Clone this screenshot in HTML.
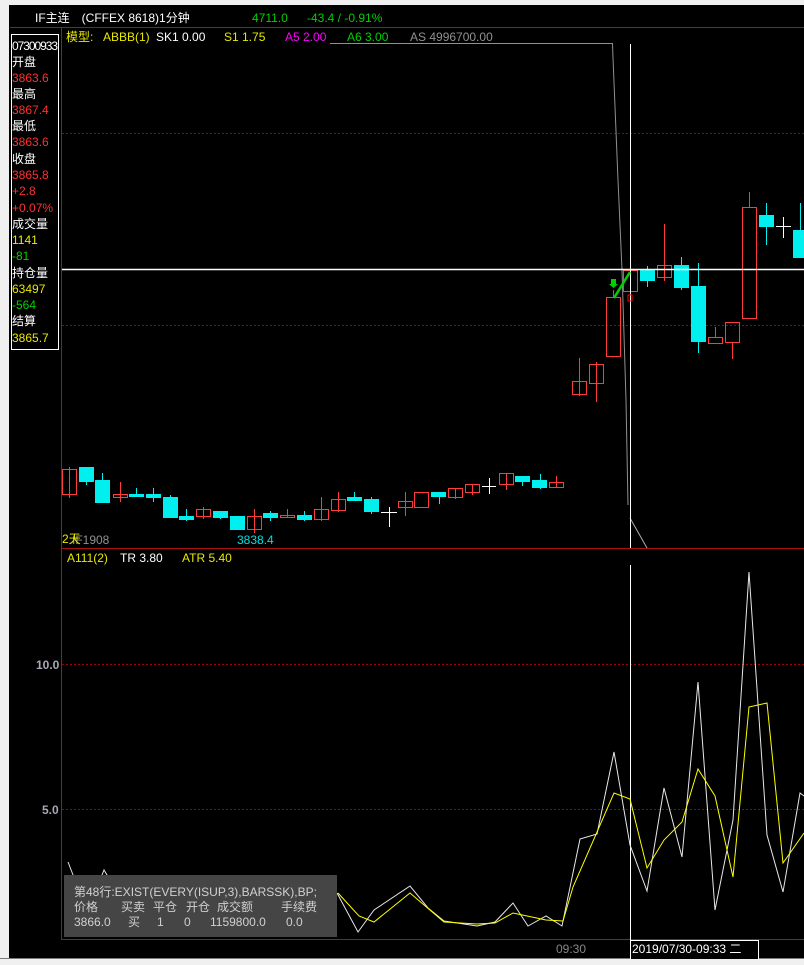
<!DOCTYPE html>
<html><head><meta charset="utf-8"><style>
html,body{margin:0;padding:0;background:#f0f0f0;width:804px;height:965px;overflow:hidden}
svg{position:absolute;left:0;top:0}
text{font-family:"Liberation Sans","Noto Sans CJK SC",sans-serif;font-size:12px}
</style></head><body>
<svg width="804" height="965" viewBox="0 0 804 965">
<rect x="0" y="0" width="804" height="965" fill="#f0f0f0"/>
<rect x="9" y="5" width="795" height="953" fill="#000"/>
<rect x="0" y="958" width="804" height="1" fill="#7a7a7a"/>
<!-- title -->
<text x="35" y="22" fill="#fff" font-size="12.5">IF主连　(CFFEX 8618)1分钟</text>
<text x="252" y="22" fill="#00d000" font-size="13">4711.0</text>
<text x="307" y="22" fill="#00d000" font-size="13">-43.4 / -0.91%</text>
<line x1="10" y1="27.5" x2="804" y2="27.5" stroke="#b01010"/>
<g font-size="12.5">
<text x="66" y="41" fill="#e8e800">模型:</text>
<text x="103" y="41" fill="#e8e800">ABBB(1)</text>
<text x="156" y="41" fill="#fff">SK1 0.00</text>
<text x="224" y="41" fill="#e8e800">S1 1.75</text>
<text x="285" y="41" fill="#ff00ff">A5 2.00</text>
<text x="347" y="41" fill="#00d000">A6 3.00</text>
<text x="410" y="41" fill="#909090">AS 4996700.00</text>
</g>
<!-- left info box -->
<rect x="11.5" y="34.5" width="47" height="315" fill="#000" stroke="#fff"/>
<g font-size="13">
<text x="12" y="50" fill="#fff" textLength="46" font-size="12">07300933</text>
<text x="12" y="66" fill="#fff">开盘</text>
<text x="12" y="82" fill="#ff3030">3863.6</text>
<text x="12" y="98" fill="#fff">最高</text>
<text x="12" y="114" fill="#ff3030">3867.4</text>
<text x="12" y="130" fill="#fff">最低</text>
<text x="12" y="146" fill="#ff3030">3863.6</text>
<text x="12" y="163" fill="#fff">收盘</text>
<text x="12" y="179" fill="#ff3030">3865.8</text>
<text x="12" y="195" fill="#ff3030">+2.8</text>
<text x="12" y="212" fill="#ff3030">+0.07%</text>
<text x="12" y="228" fill="#fff">成交量</text>
<text x="12" y="244" fill="#e8e800">1141</text>
<text x="12" y="260" fill="#00d000">-81</text>
<text x="12" y="277" fill="#fff">持仓量</text>
<text x="12" y="293" fill="#e8e800">63497</text>
<text x="12" y="309" fill="#00d000">-564</text>
<text x="12" y="325" fill="#fff">结算</text>
<text x="12" y="342" fill="#e8e800">3865.7</text>
</g>
<!-- frames -->
<line x1="61.5" y1="28" x2="61.5" y2="940" stroke="#b01010"/>
<line x1="61" y1="548.5" x2="804" y2="548.5" stroke="#b01010"/>
<line x1="61" y1="939.5" x2="804" y2="939.5" stroke="#b01010"/>
<g stroke="#a00000" stroke-dasharray="2,2">
<line x1="62" y1="133.5" x2="804" y2="133.5"/>
<line x1="62" y1="325.5" x2="804" y2="325.5"/>
<line x1="62" y1="664.5" x2="804" y2="664.5"/>
<line x1="62" y1="809.5" x2="804" y2="809.5"/>
</g>
<text x="36" y="669" fill="#a8a8b8" font-weight="bold" font-size="12">10.0</text>
<text x="42" y="814" fill="#a8a8b8" font-weight="bold" font-size="12">5.0</text>
<!-- gray price line -->
<polyline points="330,43.5 612.5,43.5 613,58 618,180 622,270 626,400 628,505" fill="none" stroke="#909090"/>
<line x1="630" y1="518" x2="647" y2="548" stroke="#aaa"/>
<!-- candles -->
<g stroke="#ff3c3c" fill="none">
<line x1="69.5" y1="467" x2="69.5" y2="498"/><rect x="62.5" y="469.5" width="14" height="25"/>
<line x1="120.5" y1="482" x2="120.5" y2="502"/><rect x="113.5" y="494.5" width="14" height="3"/>
<line x1="203.5" y1="507" x2="203.5" y2="519"/><rect x="196.5" y="509.5" width="14" height="7"/>
<line x1="254.5" y1="509" x2="254.5" y2="533"/><rect x="247.5" y="516.5" width="14" height="13"/>
<line x1="287.5" y1="509" x2="287.5" y2="517"/><rect x="280.5" y="515.5" width="14" height="2"/>
<line x1="321.5" y1="497" x2="321.5" y2="521"/><rect x="314.5" y="509.5" width="14" height="10"/>
<line x1="338.5" y1="492" x2="338.5" y2="512"/><rect x="331.5" y="499.5" width="14" height="11"/>
<line x1="405.5" y1="492" x2="405.5" y2="516"/><rect x="398.5" y="501.5" width="14" height="6"/>
<rect x="414.5" y="492.5" width="14" height="15"/>
<line x1="455.5" y1="488" x2="455.5" y2="499"/><rect x="448.5" y="488.5" width="14" height="9"/>
<line x1="472.5" y1="484" x2="472.5" y2="495"/><rect x="465.5" y="484.5" width="14" height="8"/>
<line x1="506.5" y1="473" x2="506.5" y2="490"/><rect x="499.5" y="473.5" width="14" height="11"/>
<line x1="556.5" y1="476" x2="556.5" y2="487"/><rect x="549.5" y="482.5" width="14" height="5"/>
<line x1="579.5" y1="358" x2="579.5" y2="396"/><rect x="572.5" y="381.5" width="14" height="13"/>
<line x1="596.5" y1="362" x2="596.5" y2="402"/><rect x="589.5" y="364.5" width="14" height="19"/>
<line x1="613.5" y1="290" x2="613.5" y2="297"/><rect x="606.5" y="297.5" width="14" height="59"/>
<rect x="623.5" y="270.5" width="14" height="21"/>
<line x1="664.5" y1="224" x2="664.5" y2="281"/><rect x="657.5" y="265.5" width="14" height="12"/>
<line x1="715.5" y1="327" x2="715.5" y2="337"/><rect x="708.5" y="337.5" width="14" height="6"/>
<line x1="732.5" y1="342" x2="732.5" y2="359"/><rect x="725.5" y="322.5" width="14" height="20"/>
<line x1="749.5" y1="192" x2="749.5" y2="207"/><rect x="742.5" y="207.5" width="14" height="111"/>
</g>
<g fill="#00f0f0" stroke="#00f0f0">
<line x1="86.5" y1="467" x2="86.5" y2="485"/><rect x="79.5" y="467.5" width="14" height="14"/>
<line x1="102.5" y1="473" x2="102.5" y2="502"/><rect x="95.5" y="480.5" width="14" height="22"/>
<line x1="136.5" y1="488" x2="136.5" y2="496"/><rect x="129.5" y="494.5" width="14" height="2"/>
<line x1="153.5" y1="488" x2="153.5" y2="502"/><rect x="146.5" y="494.5" width="14" height="3"/>
<line x1="170.5" y1="495" x2="170.5" y2="517"/><rect x="163.5" y="497.5" width="14" height="20"/>
<line x1="186.5" y1="509" x2="186.5" y2="521"/><rect x="179.5" y="516.5" width="14" height="3"/>
<line x1="220.5" y1="511" x2="220.5" y2="519"/><rect x="213.5" y="511.5" width="14" height="6"/>
<rect x="230.5" y="516.5" width="14" height="13"/>
<line x1="270.5" y1="511" x2="270.5" y2="521"/><rect x="263.5" y="513.5" width="14" height="4"/>
<line x1="304.5" y1="511" x2="304.5" y2="521"/><rect x="297.5" y="515.5" width="14" height="4"/>
<line x1="354.5" y1="492" x2="354.5" y2="500"/><rect x="347.5" y="497.5" width="14" height="3"/>
<line x1="371.5" y1="497" x2="371.5" y2="514"/><rect x="364.5" y="499.5" width="14" height="12"/>
<line x1="439.5" y1="492" x2="439.5" y2="504"/><rect x="431.5" y="492.5" width="14" height="4"/>
<line x1="522.5" y1="476" x2="522.5" y2="486"/><rect x="515.5" y="476.5" width="14" height="5"/>
<line x1="540.5" y1="474" x2="540.5" y2="489"/><rect x="532.5" y="480.5" width="14" height="7"/>
<line x1="647.5" y1="266" x2="647.5" y2="287"/><rect x="640.5" y="269.5" width="14" height="11"/>
<line x1="681.5" y1="257" x2="681.5" y2="290"/><rect x="674.5" y="265.5" width="14" height="22"/>
<line x1="698.5" y1="263" x2="698.5" y2="353"/><rect x="691.5" y="286.5" width="14" height="55"/>
<line x1="766.5" y1="203" x2="766.5" y2="245"/><rect x="759.5" y="215.5" width="14" height="11"/>
<line x1="800.5" y1="203" x2="800.5" y2="230"/><rect x="793.5" y="230.5" width="14" height="27"/>
</g>
<g stroke="#fff">
<line x1="381" y1="512.5" x2="397" y2="512.5"/><line x1="389.5" y1="507" x2="389.5" y2="527"/>
<line x1="482" y1="486.5" x2="496" y2="486.5"/><line x1="489.5" y1="478" x2="489.5" y2="494"/>
<line x1="776" y1="226.5" x2="791" y2="226.5"/><line x1="783.5" y1="217" x2="783.5" y2="238"/>
</g>
<!-- cursor -->
<line x1="62" y1="269.5" x2="804" y2="269.5" stroke="#fff" stroke-width="1.5"/>
<line x1="630.5" y1="44" x2="630.5" y2="548" stroke="#fff"/>
<line x1="630.5" y1="565" x2="630.5" y2="958" stroke="#fff"/>
<!-- signal -->
<line x1="614" y1="298" x2="630" y2="272" stroke="#00d000" stroke-width="2.5"/>
<polygon points="611,279 616,279 616,284 618,284 613.5,288 609,284 611,284" fill="#00d000"/>
<rect x="628" y="295" width="4" height="6" fill="none" stroke="#f00"/>
<!-- labels -->
<text x="72" y="544" fill="#909090" font-size="11">IF1908</text>
<text x="62" y="543" fill="#e8e800">2天</text>
<text x="237" y="544" fill="#00e0e0">3838.4</text>
<text x="67" y="562" fill="#e8e800">A111(2)</text>
<text x="120" y="562" fill="#fff">TR 3.80</text>
<text x="182" y="562" fill="#e8e800">ATR 5.40</text>
<!-- indicator lines -->
<polyline fill="none" stroke="#e8e8e8" points="68,862 75,880"/>
<polyline fill="none" stroke="#e8e8e8" points="100,880 104,870 110,880"/>
<polyline fill="none" stroke="#e8e8e8" points="337,893 358,932 374,910 410,886 428,908 444,921 477,926 495,922 513,903 528,926 546,916 562,926 580,839 597,834 614,752 630,845 647,891 664,788 682,857 698,682 715,910 733,820 749,572 767,835 783,892 800,793 804,796"/>
<polyline fill="none" stroke="#ffff00" points="338,893 359,916 374,922 410,893 444,922 477,924 495,923 513,913 546,920 563,921 573,887 614,793 630,799 647,868 664,840 682,822 698,769 715,796 733,877 749,707 767,703 783,863 804,833"/>
<!-- overlay -->
<rect x="64" y="875" width="273" height="62" fill="#454545"/>
<g fill="#d0d0d0" font-size="12">
<text x="74" y="896">第48行:EXIST(EVERY(ISUP,3),BARSSK),BP;</text>
<text x="74" y="911">价格</text><text x="121" y="911">买卖</text><text x="153" y="911">平仓</text><text x="186" y="911">开仓</text><text x="217" y="911">成交额</text><text x="281" y="911">手续费</text>
<text x="74" y="926">3866.0</text><text x="128" y="926">买</text><text x="157" y="926">1</text><text x="184" y="926">0</text><text x="210" y="926">1159800.0</text><text x="286" y="926">0.0</text>
</g>
<!-- bottom -->
<text x="556" y="953" fill="#888" font-size="12">09:30</text>
<rect x="630.5" y="940.5" width="128" height="20" fill="#000" stroke="#fff"/>
<text x="632" y="953" fill="#fff" font-size="12">2019/07/30-09:33 二</text>
<rect x="0" y="959" width="804" height="6" fill="#f0f0f0"/>
</svg>
</body></html>
